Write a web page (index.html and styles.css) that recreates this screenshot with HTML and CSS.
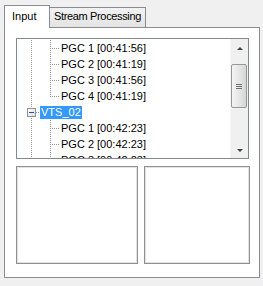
FILE: index.html
```html
<!DOCTYPE html>
<html lang="en">
<head>
    <meta charset="UTF-8">
    <title>Input</title>
    <link rel="stylesheet" href="styles.css">
</head>
<body>
    <div class="tabs">
        <div class="tab active">Input</div>
        <div class="tab">Stream Processing</div>
    </div>
    <div class="panel">
        <div class="tree">
            <div class="tree-list">
                <div class="row leaf"><span class="label">PGC 1 [00:41:56]</span></div>
                <div class="row leaf"><span class="label">PGC 2 [00:41:19]</span></div>
                <div class="row leaf"><span class="label">PGC 3 [00:41:56]</span></div>
                <div class="row leaf last"><span class="label">PGC 4 [00:41:19]</span></div>
                <div class="row node">
                    <span class="exp"><span class="minus"></span></span>
                    <span class="tick"></span>
                    <span class="label sel">VTS_02</span>
                </div>
                <div class="row leaf"><span class="label">PGC 1 [00:42:23]</span></div>
                <div class="row leaf"><span class="label">PGC 2 [00:42:23]</span></div>
                <div class="row leaf"><span class="label">PGC 3 [00:42:23]</span></div>
            </div>
            <div class="scrollbar">
                <div class="sb-btn"><span class="arrow up"></span></div>
                <div class="sb-track">
                    <div class="thumb"><span class="grip"></span></div>
                </div>
                <div class="sb-btn"><span class="arrow down"></span></div>
            </div>
        </div>
        <div class="boxes">
            <div class="box wide"></div>
            <div class="box narrow"></div>
        </div>
    </div>
</body>
</html>
```

FILE: styles.css
```css
body {
    margin: 0;
    padding: 5px 0 0 4px;
    background: #f0f0f0;
    font-family: "Liberation Sans", Arial, sans-serif;
    font-size: 11px;
    color: #000;
}
.tabs {
    display: flex;
    align-items: flex-end;
    height: 22px;
}
.tab {
    box-sizing: border-box;
    height: 20px;
    border: 1px solid #898c95;
    border-bottom: none;
    background: linear-gradient(#f2f2f2, #e3e3e3);
    padding: 2px 0 0 4px;
    width: 97px;
    margin-left: -1px;
    letter-spacing: -0.35px;
    white-space: nowrap;
}
.tab.active {
    position: relative;
    z-index: 1;
    height: 23px;
    width: 46px;
    margin-left: 0;
    margin-bottom: -1px;
    padding: 4px 0 0 7px;
    background: #fff;
    letter-spacing: 0;
}
.panel {
    box-sizing: border-box;
    width: 256px;
    height: 251px;
    border: 1px solid #898c95;
    background: #fff;
    padding: 10px 0 0 11px;
}
.tree {
    box-sizing: border-box;
    display: flex;
    width: 233px;
    height: 121px;
    border: 1px solid #828790;
    overflow: hidden;
}
.tree-list {
    flex: 1;
    padding-top: 1px;
    overflow: hidden;
}
.row {
    display: flex;
    align-items: center;
    height: 16px;
    white-space: nowrap;
    background-repeat: no-repeat;
}
.leaf {
    background-image:
        repeating-linear-gradient(#999 0 1px, transparent 1px 2px),
        repeating-linear-gradient(#999 0 1px, transparent 1px 2px),
        repeating-linear-gradient(to right, #999 0 1px, transparent 1px 2px);
    background-position: 14px 0, 33px 0, 35px 8px;
    background-size: 1px 16px, 1px 16px, 7px 1px;
}
.leaf.last {
    background-size: 1px 16px, 1px 9px, 7px 1px;
}
.leaf .label {
    margin-left: 44px;
}
.node {
    align-items: flex-start;
    background-image: repeating-linear-gradient(#999 0 1px, transparent 1px 2px);
    background-position: 14px 0;
    background-size: 1px 16px;
}
.exp {
    box-sizing: border-box;
    display: flex;
    align-items: center;
    justify-content: center;
    width: 9px;
    height: 9px;
    margin: 4px 0 0 10px;
    border: 1px solid #919191;
    background: linear-gradient(135deg, #fff, #dcdcdc);
}
.minus {
    width: 5px;
    height: 1px;
    background: #2f4f8f;
}
.tick {
    width: 4px;
    height: 1px;
    margin-top: 8px;
    background: repeating-linear-gradient(to right, #999 0 1px, transparent 1px 2px);
}
.sel {
    margin-top: 2px;
    line-height: 13px;
    padding: 0 1px;
    background: #3399ff;
    color: #fff;
}
.scrollbar {
    display: flex;
    flex-direction: column;
    width: 17px;
    background: #f0f0f0;
    border-left: 1px solid #f7f7f7;
}
.sb-btn {
    display: flex;
    align-items: center;
    justify-content: center;
    height: 17px;
}
.arrow {
    width: 0;
    height: 0;
    border-left: 3px solid transparent;
    border-right: 3px solid transparent;
}
.arrow.up {
    border-bottom: 3px solid #404040;
    margin-top: 2px;
}
.arrow.down {
    border-top: 3px solid #404040;
    margin-top: 1px;
}
.sb-track {
    flex: 1;
    padding-top: 8px;
}
.thumb {
    box-sizing: border-box;
    display: flex;
    align-items: center;
    justify-content: center;
    height: 44px;
    margin: 0 1px 0 0;
    border: 1px solid #979797;
    border-radius: 2px;
    background: linear-gradient(to right, #f4f4f4, #e6e6e6 50%, #d6d6d6);
}
.grip {
    width: 6px;
    height: 5px;
    background: repeating-linear-gradient(#6f6f6f 0 1px, transparent 1px 2px);
}
.boxes {
    display: flex;
    gap: 6px;
    margin-top: 7px;
}
.box {
    box-sizing: border-box;
    height: 98px;
    border: 1px solid #8f8f8f;
    box-shadow: inset 0 0 0 1px #e3e3e3;
    background: #fff;
}
.box.wide {
    width: 122px;
}
.box.narrow {
    width: 106px;
}
```
